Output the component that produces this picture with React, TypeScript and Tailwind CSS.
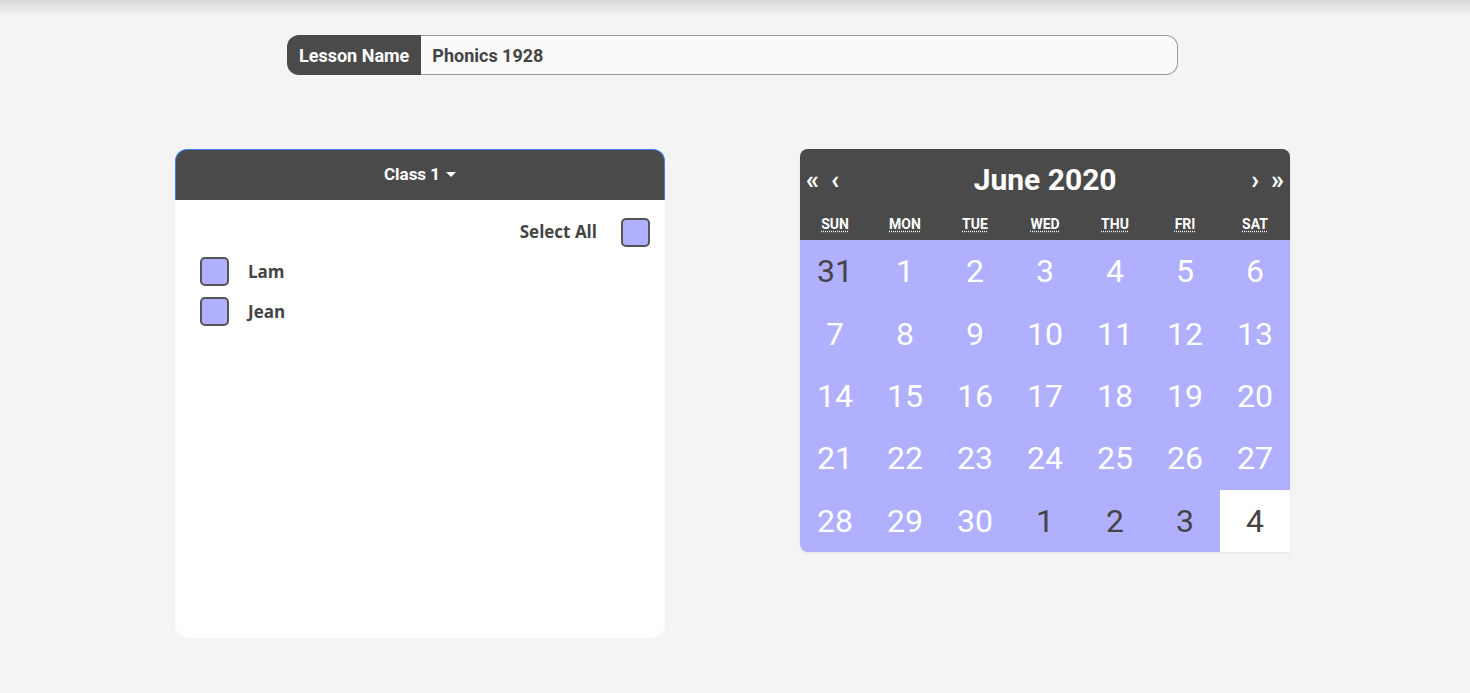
import React from "react";

const days = [
  { n: 31, o: true }, { n: 1 }, { n: 2 }, { n: 3 }, { n: 4 }, { n: 5 }, { n: 6 },
  { n: 7 }, { n: 8 }, { n: 9 }, { n: 10 }, { n: 11 }, { n: 12 }, { n: 13 },
  { n: 14 }, { n: 15 }, { n: 16 }, { n: 17 }, { n: 18 }, { n: 19 }, { n: 20 },
  { n: 21 }, { n: 22 }, { n: 23 }, { n: 24 }, { n: 25 }, { n: 26 }, { n: 27 },
  { n: 28 }, { n: 29 }, { n: 30 }, { n: 1, o: true }, { n: 2, o: true }, { n: 3, o: true }, { n: 4, o: true, t: true },
] as { n: number; o?: boolean; t?: boolean }[];

const weekdays = [
  ["SUN", "Sunday"], ["MON", "Monday"], ["TUE", "Tuesday"], ["WED", "Wednesday"],
  ["THU", "Thursday"], ["FRI", "Friday"], ["SAT", "Saturday"],
];

function Check() {
  return <span className="block w-[29px] h-[29px] rounded-[5px] border-2 border-[#555] bg-[#b0b0ff]" />;
}

export default function App() {
  return (
    <div className="min-h-[693px] bg-[#f4f4f4] font-['Roboto',sans-serif]">
      <div className="h-[16px] bg-gradient-to-b from-[#d8d8d8] to-[#f4f4f4]" />
      <div className="pt-[19px] pl-[287px]">
        <div className="flex w-[891px] h-[40px]">
          <div className="flex items-center px-[12px] bg-[#4a4a4a] text-white font-bold text-[18px] rounded-l-[12px]">
            Lesson Name
          </div>
          <div className="flex-1 flex items-center pl-[11px] bg-[#fafafa] border border-[#999] border-l-0 rounded-r-[12px] text-[#444] font-bold text-[18px]">
            Phonics 1928
          </div>
        </div>
      </div>
      <div className="flex gap-[135px] pl-[175px] pt-[74px]">
        <div className="w-[490px] h-[489px] bg-white rounded-[14px] flex flex-col">
          <div className="h-[51px] bg-[#4a4a4a] rounded-t-[12px] border border-[#3b82f6] border-b-0 flex items-center justify-center text-white font-bold text-[17px]">
            <span>Class 1</span>
            <svg width="10" height="6" viewBox="0 0 10 6" className="ml-[6px]">
              <path d="M0 0h10L5 5z" fill="white" />
            </svg>
          </div>
          <div className="font-['Open_Sans',sans-serif] font-bold text-[#444] text-[17px]">
            <div className="flex items-center justify-end pt-[18px] pr-[15px]">
              <span className="mr-[24px] -mt-[1px]">Select All</span>
              <Check />
            </div>
            <div className="flex items-center pl-[25px] mt-[10px]">
              <Check />
              <span className="ml-[19px]">Lam</span>
            </div>
            <div className="flex items-center pl-[25px] mt-[11px]">
              <Check />
              <span className="ml-[19px]">Jean</span>
            </div>
          </div>
        </div>
        <div className="w-[490px] h-[403px] rounded-[8px] rounded-br-none overflow-hidden bg-[#b0b0ff] shadow-[0_1px_2px_rgba(0,0,0,0.08)]">
          <div className="bg-[#4a4a4a] h-[91px] text-white flex flex-col">
            <div className="flex items-center h-[60px] pt-[2px] px-[6px] font-bold">
              <span className="text-[26px] leading-none">«</span>
              <span className="text-[26px] leading-none ml-[12px]">‹</span>
              <span className="flex-1 text-center text-[30px] leading-none">June 2020</span>
              <span className="text-[26px] leading-none">›</span>
              <span className="text-[26px] leading-none ml-[12px]">»</span>
            </div>
            <div className="grid grid-cols-7 text-center text-[14px] font-bold leading-none pt-[8px]">
              {weekdays.map(([a, t]) => (
                <abbr key={a} title={t} className="underline decoration-dotted underline-offset-[2px]">
                  {a}
                </abbr>
              ))}
            </div>
          </div>
          <div className="grid grid-cols-7 grid-rows-5 h-[312px]">
            {days.map((d, i) => (
              <div
                key={i}
                className={
                  "flex items-center justify-center text-[32px] " +
                  (d.t ? "bg-white text-[#444]" : d.o ? "text-[#444]" : "text-white")
                }
              >
                {d.n}
              </div>
            ))}
          </div>
        </div>
      </div>
    </div>
  );
}
